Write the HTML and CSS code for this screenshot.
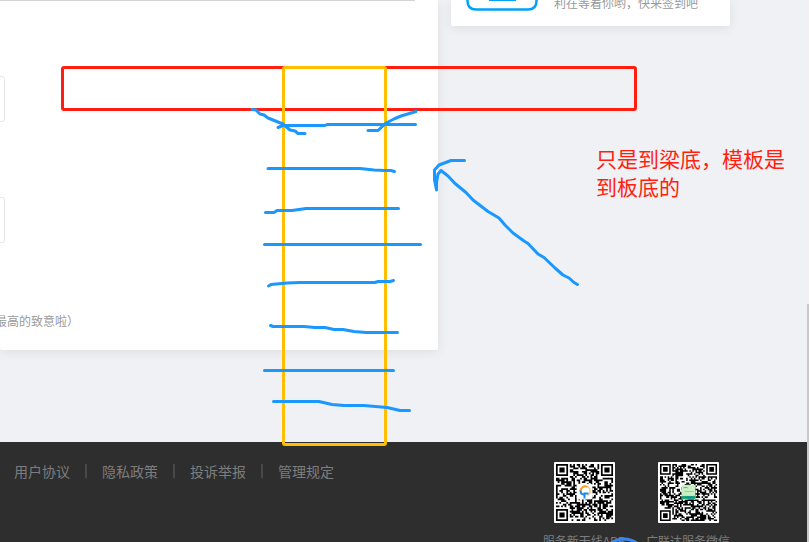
FILE: index.html
```html
<!DOCTYPE html>
<html lang="zh-CN">
<head>
    <meta charset="UTF-8">
    <title>服务新干线</title>
    <meta name="viewport" content="width=device-width, initial-scale=1.0">
    <link rel="stylesheet" href="styles.css">
</head>
<body>
    <div class="content">
        <main class="card article">
            <div class="divider"></div>
            <div class="field"></div>
            <div class="field"></div>
            <p class="tip">最高的致意啦）</p>
        </main>
        <aside class="card sign-in">
            <svg class="sign-icon" width="72" height="11" viewBox="0 0 72 11">
                <path d="M1.500 -4V1Q1.500 9.500 10 9.500H62Q70.500 9.500 70.500 1V-4" fill="none" stroke="#02a2f8" stroke-width="2.500"/>
                <path d="M23 0H50" stroke="#02a2f8" stroke-width="2"/>
            </svg>
            <p>利在等着你哟，快来签到吧</p>
        </aside>
    </div>
    <footer>
        <nav>
            <a href="#">用户协议</a>
            <a href="#">隐私政策</a>
            <a href="#">投诉举报</a>
            <a href="#">管理规定</a>
        </nav>
        <div class="codes">
            <div class="code">
                <svg class="qr" id="qr-app" viewBox="0 0 62 62">
                    <rect width="62" height="62" rx="1" fill="#fff"/>
                    <path class="modules"/>
                    <rect x="23" y="22" width="16" height="16" rx="2" fill="#fff"/>
                    <path d="M27 30A5 5 0 0 1 34 25" fill="none" stroke="#f9a11b" stroke-width="2"/>
                    <path d="M34 25A5 5 0 0 1 34 34" fill="none" stroke="#f5c98d" stroke-width="1.500"/>
                    <path d="M27 29Q27 33 30 33M35 32H31V37" fill="none" stroke="#1688ee" stroke-width="2"/>
                </svg>
                <p>服务新干线APP</p>
            </div>
            <div class="code">
                <svg class="qr" id="qr-wechat" viewBox="0 0 62 62">
                    <rect width="62" height="62" rx="1" fill="#fff"/>
                    <path class="modules"/>
                    <rect x="24" y="23" width="14" height="15" rx="1" fill="#c9efc4"/>
                    <path d="M26 26H30" stroke="#74a88a"/>
                    <path d="M27 30H36" stroke="#8accdc"/>
                    <path d="M24 36H38" stroke="#19a568" stroke-width="3"/>
                    <path d="M29 36H35" stroke="#1388c9" stroke-width="2"/>
                </svg>
                <p>广联达服务微信</p>
            </div>
        </div>
    </footer>
    <div class="scrollbar"></div>

    <!-- hand-drawn marks over the page -->
    <svg class="marks" width="809" height="542" viewBox="0 0 809 542">
        <rect x="62.500" y="67.500" width="573" height="42" rx="1.500" stroke="#ff1e10"/>
        <rect x="283.500" y="67.500" width="102" height="377" rx="1.500" stroke="#ffbf00"/>
        <g stroke="#1a98ff">
            <path d="M252 109.500L256 110L260 114L264 115L268 118L283 124L290 130L295 131L298 133.500H305"/>
            <path d="M278 127.500L283 125.500H325L327 124.500H415.500"/>
            <path d="M368 130.500H378L386 123L395 118.500L401 116L416 111.500"/>
            <path d="M268 168.500H360L374 170L385 170.500H391L394.500 171.500"/>
            <path d="M265.500 212.500H274L277 210.500H292L306 208.500H398.500"/>
            <path d="M264.500 244.500H420.500"/>
            <path d="M268.500 286L271 284.500L287 283L300 282.500H375L378 281.500H390L393.500 280.500"/>
            <path d="M270.500 325.500L273 326.500H304L315 327.500H325L334 329.500H343L354 331.500L366 332.500H397.500"/>
            <path d="M264.500 370.500H393.500"/>
            <path d="M273.500 401.500H319L332 404.500L344 405.500H364L387 407.500L400 410.500H409.500"/>
            <path d="M464.500 160.500H451L439 165L434.500 170V180L436.500 190V182L438 174L441 170.500L448 176L455 183.500L466 192.500L473 200L488 211.500L499 218L505 225L513 233L524 241L528 243.500L538 254L544 257.500L555 268L563 275L569 278L574 282.500L577.500 284.500"/>
        </g>
        <circle cx="624" cy="561" r="22" stroke="#3a86ec"/>
    </svg>
    <p class="note">只是到梁底，模板是到板底的</p>

    <script src="script.js"></script>
</body>
</html>
```
FILE: styles.css
```css
* {
    box-sizing: border-box;
}
body {
    margin: 0;
    height: 100vh;
    overflow: hidden;
    display: flex;
    flex-direction: column;
    background: #f0f1f4;
    font-family: "Noto Sans CJK SC", "Noto Sans", sans-serif;
    font-size: 12px;
    line-height: 20px;
    color: #999;
}
p {
    margin: 0;
}
.content {
    flex: 1;
    display: flex;
    align-items: flex-start;
    gap: 13px;
    padding: 0 79px 92px 0;
}
.card {
    background: #fff;
    border-radius: 0 0 2px 2px;
    box-shadow: 0 2px 12px rgba(0, 0, 0, 0.08);
}
.article {
    flex: 1;
    padding-bottom: 19px;
}
.divider {
    height: 1px;
    margin: 0 23px 75px 0;
    background: #d3d3d3;
}
.field {
    width: 5px;
    height: 46px;
    margin-bottom: 75px;
    border: 1px solid #e8e8e8;
    border-left: 0;
    border-radius: 0 3px 3px 0;
}
.tip {
    margin: -7px 0 0 -5px;
}
.sign-in {
    width: 279px;
    height: 26px;
    display: flex;
    align-items: flex-start;
    gap: 16px;
    padding-left: 15px;
}
.sign-in p {
    margin-top: -7px;
}
footer {
    height: 100px;
    display: flex;
    justify-content: space-between;
    align-items: flex-start;
    padding: 19px 79px 0 14px;
    background: #2e2e2e;
    color: #7d7d7d;
}
nav {
    display: flex;
    align-items: center;
    font-size: 14px;
}
nav a {
    display: flex;
    align-items: center;
    color: inherit;
    text-decoration: none;
}
nav a + a::before {
    content: "";
    width: 2px;
    height: 14px;
    margin: 0 15px;
    background: #484848;
}
.codes {
    display: flex;
    gap: 20px;
    padding-top: 1px;
}
.code {
    width: 84px;
    text-align: center;
    white-space: nowrap;
}
.qr {
    display: block;
    width: 61px;
    height: 61px;
    margin: 0 auto 8px;
}
.modules {
    fill: #000;
}
.scrollbar {
    position: absolute;
    top: 0;
    right: 0;
    bottom: 0;
    width: 2px;
    background: linear-gradient(#f1f1f1 56%, #c8c8c8 56%);
}
.marks {
    position: absolute;
    top: 0;
    left: 0;
    fill: none;
    stroke-width: 3;
    stroke-linecap: round;
    stroke-linejoin: round;
}
.note {
    position: absolute;
    top: 144px;
    left: 596px;
    width: 190px;
    font-size: 21px;
    line-height: 28px;
    color: #ff1e10;
}
```
FILE: script.js
```javascript
// Fill a code with modules, keeping the three corner finders clear
function drawCode(id, count, seed) {
    const unit = 58 / count;
    let path = '';

    function box(x, y, width, height) {
        path += `M${2 + x * unit} ${2 + y * unit}h${width * unit}v${height * unit}h${-width * unit}z`;
    }

    function random() {
        seed = (seed * 1103515245 + 12345) % 2147483648;
        return seed / 2147483648;
    }

    function inFinder(x, y) {
        return (x < 8 && y < 8) || (x >= count - 8 && y < 8) || (x < 8 && y >= count - 8);
    }

    for (let y = 0; y < count; y++) {
        let run = 0;
        for (let x = 0; x <= count; x++) {
            if (x < count && random() < 0.54 && !inFinder(x, y)) {
                run++;
            } else if (run) {
                box(x - run, y, run, 1);
                run = 0;
            }
        }
    }
    [[0, 0], [count - 7, 0], [0, count - 7]].forEach(([x, y]) => {
        box(x, y, 7, 7);
        box(x + 1, y + 1, 5, 5);
        box(x + 2, y + 2, 3, 3);
    });

    const modules = document.querySelector('#' + id + ' .modules');
    modules.setAttribute('d', path);
    modules.setAttribute('fill-rule', 'evenodd');
}

drawCode('qr-app', 33, 17);
drawCode('qr-wechat', 37, 42);
```
